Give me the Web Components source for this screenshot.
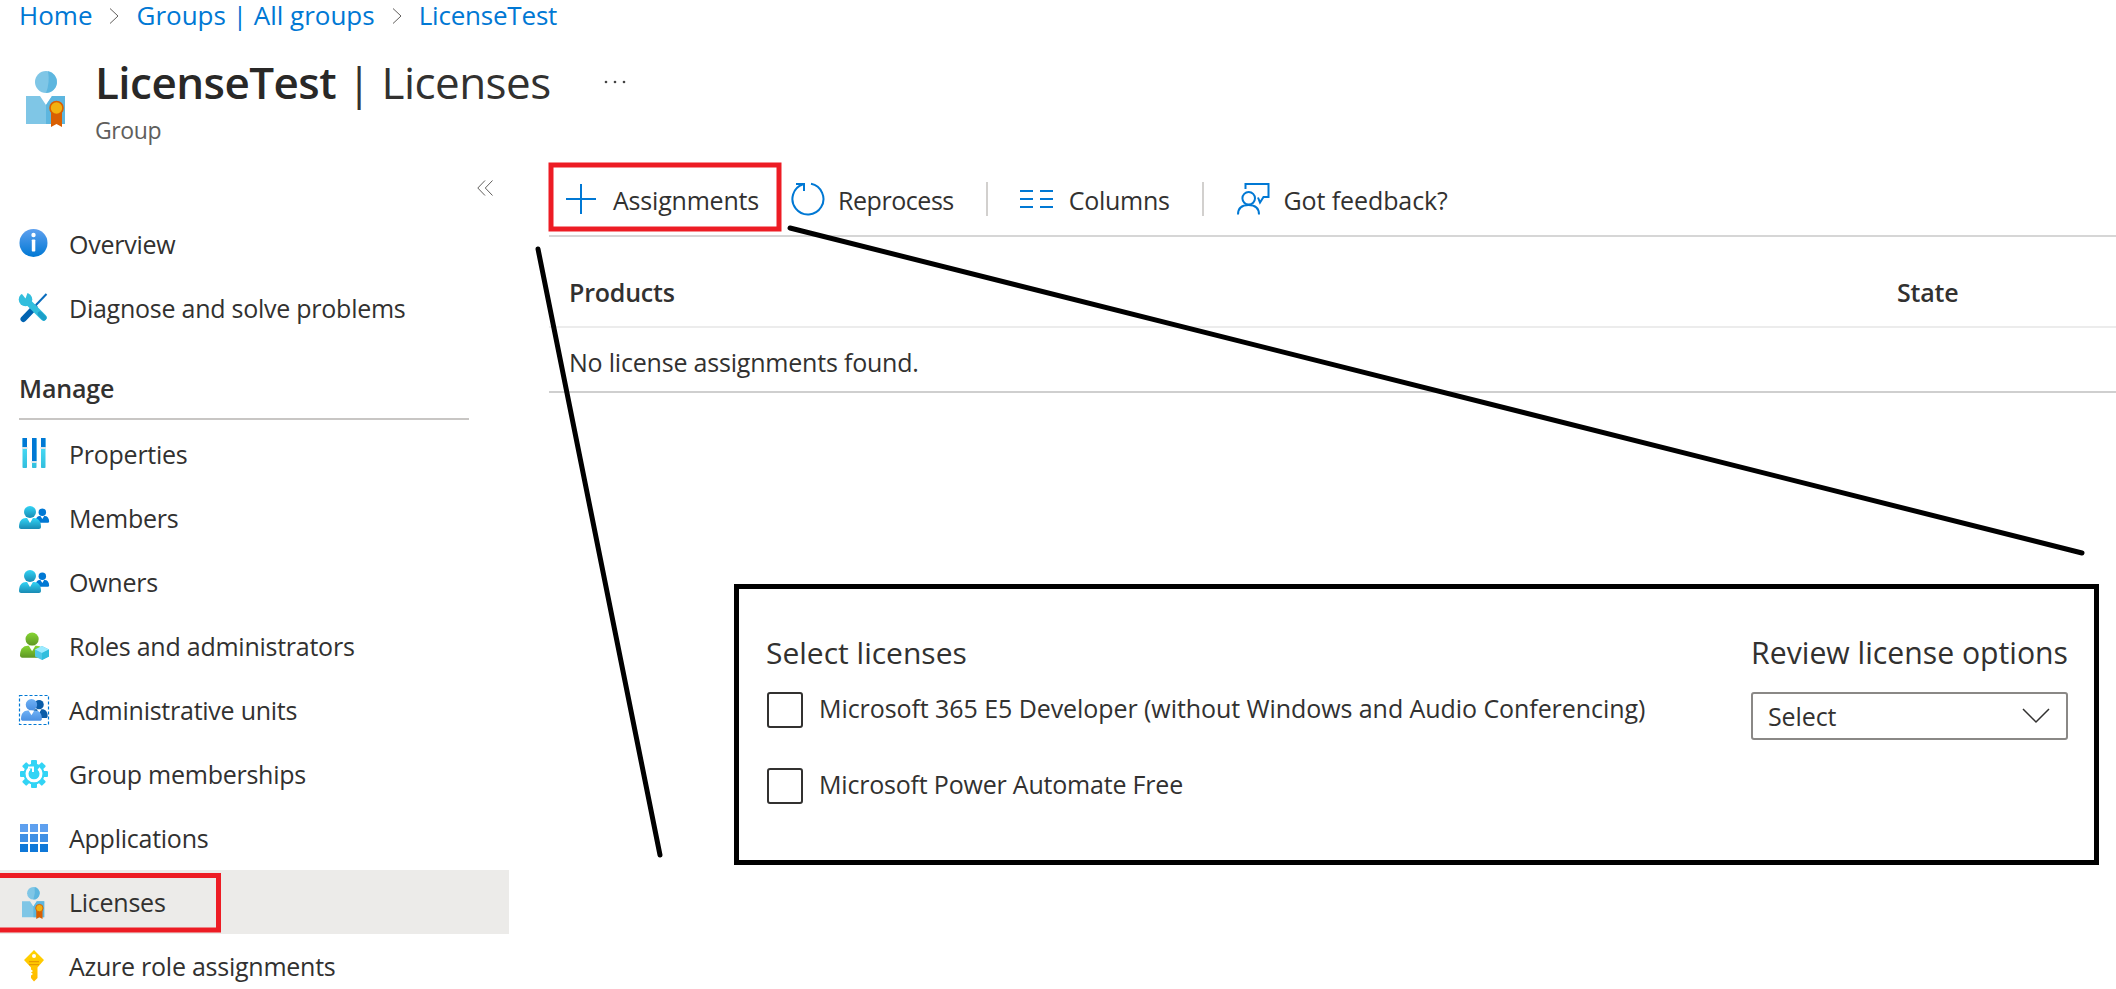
<!DOCTYPE html>
<html lang="en"><head><meta charset="utf-8"><title>LicenseTest | Licenses</title>
<style>
html,body{margin:0;padding:0;background:#fff;height:989px;overflow:hidden}
body{font-family:"Open Sans","Noto Sans",sans-serif;color:#323130}
</style></head><body>
<x-app></x-app>
<script>
const LIC=`<path d="M0 25h14l6 9 6-9h13v28H0z" fill="#7fc6e6"/><path d="M20 34l6-9h13v28H20z" fill="#5db6df"/><circle cx="20" cy="11" r="11" fill="#7fc6e6"/><path d="M22 .2A11 11 0 0 1 20 22 40 40 0 0 0 22 .2z" fill="#5db6df"/><path d="M25 40h11v16l-5.500-3-5.500 3z" fill="#d95f02"/><circle cx="30.500" cy="37" r="6.500" fill="#f2b10f" stroke="#d95f02" stroke-width="1.600"/>`;
const PERSON=(x,y,s,a,b)=>`<g transform="translate(${x} ${y}) scale(${s})"><circle cx="11" cy="6" r="6" fill="${a}"/><path d="M0 21c0-6 3-9 7-9h8c4 0 7 3 7 9 0 1-1 2-2 2H2c-1 0-2-1-2-2z" fill="${b}"/><path d="M8 12h6l-3 5z" fill="#fff"/></g>`;
const GRAD=(id,a,b)=>`<defs><linearGradient id="${id}" x1="0" y1="0" x2="0" y2="1"><stop offset="0" stop-color="${a}"/><stop offset="1" stop-color="${b}"/></linearGradient></defs>`;
const TEETH=[0,45,90,135,180,225,270,315].map(a=>`<rect x="17" y="6" width="6" height="6" rx="1" transform="rotate(${a} 20 20)" fill="#32d4f5"/>`).join('');
const ICONS={
 info:GRAD('g','#5ea0ef','#0078d4')+`<circle cx="19.500" cy="19" r="14" fill="url(#g)"/><rect x="17.800" y="15.500" width="3.500" height="12" rx=".8" fill="#fff"/><circle cx="19.500" cy="11" r="2.200" fill="#fff"/>`,
 tools:`<path d="M32.500 6 22 17" stroke="#0a6cbd" stroke-width="2"/><path d="M20.500 19.500 9.500 31" stroke="#0063b1" stroke-width="6" stroke-linecap="round"/><path d="M13 13 29.500 29.500" stroke="#32bedd" stroke-width="6.500" stroke-linecap="round"/><circle cx="11.500" cy="11.500" r="6.800" fill="#32bedd"/><path d="M11.500 10.500 6 3.500h8z" fill="#fff"/><path d="M26 26l4 4" stroke="#1b9fc9" stroke-width="5" stroke-linecap="round"/>`,
 props:GRAD('c','#50e6ff','#32bedd')+`<rect x="8.500" y="4" width="4.500" height="30" rx=".8" fill="url(#c)"/><rect x="18" y="4" width="4.500" height="30" rx=".8" fill="url(#c)"/><rect x="27" y="4" width="4.500" height="30" rx=".8" fill="url(#c)"/><rect x="8.500" y="4" width="4.500" height="9" fill="#0078d4"/><rect x="18" y="4" width="4.500" height="23" fill="#0078d4"/><rect x="27" y="4" width="4.500" height="9" fill="#0078d4"/><rect x="8" y="13" width="5.500" height="2" fill="#d8e4ea"/><rect x="17.500" y="27" width="5.500" height="2" fill="#d8e4ea"/><rect x="26.500" y="13" width="5.500" height="2" fill="#d8e4ea"/>`,
 people:GRAD('p','#32d4f5','#198ab3')+PERSON(21.500,10.500,.62,'#0078d4','#0078d4')+PERSON(5,8,1,'url(#p)','url(#p)'),
 roles:GRAD('r','#86d633','#5e9624')+PERSON(6,6.500,1.1,'url(#r)','url(#r)')+`<path d="M28 20l7 3.500v7L28 34l-7-3.500v-7z" fill="#50c8e8"/><path d="M28 20l7 3.500-7 3.500-7-3.500z" fill="#9cebff"/><path d="M28 27l7-3.500v7L28 34z" fill="#32bedd"/>`,
 admin:GRAD('a','#6fb1f5','#4a90e2')+`<rect x="5.500" y="5.500" width="29" height="29" fill="none" stroke="#0078d4" stroke-width="1.200" stroke-dasharray="3 2"/>`+PERSON(16.500,10,.78,'#0a5ca8','#0a5ca8')+PERSON(7,9,.95,'url(#a)','url(#a)'),
 gear:`${TEETH}<circle cx="20" cy="20" r="10.500" fill="#32d4f5"/><path d="M15.500 14.500a7 7 0 1 0 9 0" fill="none" stroke="#fff" stroke-width="3"/><path d="M14 13.500h5v4.500" fill="none" stroke="#fff" stroke-width="2"/>`,
 apps:`<path d="M6 6h8v8H6zM16 6h8v8h-8zM26 6h8v8h-8z" fill="#5ea0ef"/><path d="M6 16h8v8H6zM16 16h8v8h-8zM26 16h8v8h-8z" fill="#3f8fe4"/><path d="M6 26h8v8H6zM16 26h8v8h-8zM26 26h8v8h-8z" fill="#0f78d8"/>`,
 lic:`<g transform="translate(8 5) scale(.57)">${LIC}</g>`,
 key:GRAD('k','#ffd400','#ffb900')+`<path d="M20 4l10 10-6.500 7.500V32L20 35.500 17 32v-2.500l2-1.500-2-1.500 2-1.500-2-1.500v-2L10 14z" fill="url(#k)"/><circle cx="20" cy="10" r="2" fill="#fff"/><path d="M15 15h10v1.200H15zM15 18h10v1.200H15z" fill="#e89a00"/>`
};
function def(name,html){customElements.define(name,class extends HTMLElement{constructor(){super();const s=this.attachShadow({mode:'open'});s.innerHTML=typeof html==='function'?html(this):html;}})}

def('x-breadcrumb',`<style>:host{display:flex;align-items:center;height:30px;padding-left:19px;font-size:26px;line-height:30px;color:#0078d4}
span{white-space:nowrap}svg{margin:2px 17px 0 17px;flex:none}</style>
<span>Home</span><svg width="10" height="16" viewBox="0 0 10 16"><path d="M1 .5 9 8l-8 7.500" fill="none" stroke="#605e5c" stroke-width="1"/></svg>
<span>Groups | All groups</span><svg width="10" height="16" viewBox="0 0 10 16"><path d="M1 .5 9 8l-8 7.500" fill="none" stroke="#605e5c" stroke-width="1"/></svg>
<span style="letter-spacing:-.2px">LicenseTest</span>`);

def('x-header',`<style>:host{display:flex;height:133px;padding:41px 0 0 26px;box-sizing:border-box}
.ic{flex:none;margin-right:30px}.w{margin-top:-19px}.t{font-size:44px;line-height:60px;letter-spacing:-.55px;white-space:nowrap;color:#323130}
b{font-weight:600;color:#292827}.s{font-size:23px;line-height:34px;margin-top:1px;color:#605e5c;letter-spacing:-.4px}
.d{flex:none;margin:8px 0 0 53px;align-self:flex-start}</style>
<svg class="ic" width="39" height="56" viewBox="0 0 39 56">${LIC}</svg>
<div class="w"><div class="t"><b>LicenseTest</b> | Licenses</div><div class="s">Group</div></div>
<svg class="d" width="22" height="6" viewBox="0 0 22 6"><circle cx="2" cy="3" r="1.300" fill="#444"/><circle cx="11" cy="3" r="1.300" fill="#444"/><circle cx="20" cy="3" r="1.300" fill="#444"/></svg>`);

def('x-nav-item',(h)=>`<style>:host{display:flex;align-items:center;height:64px;padding-left:14px;font-size:25px;letter-spacing:-.25px;white-space:nowrap;color:#323130}
:host([selected]){background:#ecebe9}svg{flex:none;margin-right:15px}</style>
<svg width="40" height="40" viewBox="0 0 40 40">${ICONS[h.getAttribute('icon')]}</svg><slot></slot>`);

def('x-sidebar',`<style>:host{display:block;width:509px;flex:none}
.top{display:flex;justify-content:flex-end;align-items:center;height:49px;padding-right:16px}
.m{height:64px;box-sizing:border-box;margin:16px 40px 2px 19px;width:450px;border-bottom:2px solid #c8c6c4;font-size:25px;font-weight:600;letter-spacing:-.15px;color:#323130;display:flex;align-items:flex-end;padding-bottom:12px;line-height:36px}</style>
<div class="top"><svg width="16" height="16" viewBox="0 0 16 16"><path d="M8 .5 .8 8 8 15.500M15.500 .5 8.300 8l7.200 7.500" fill="none" stroke="#605e5c" stroke-width="1"/></svg></div>
<x-nav-item icon="info">Overview</x-nav-item>
<x-nav-item icon="tools">Diagnose and solve problems</x-nav-item>
<div class="m">Manage</div>
<x-nav-item icon="props">Properties</x-nav-item>
<x-nav-item icon="people">Members</x-nav-item>
<x-nav-item icon="people">Owners</x-nav-item>
<x-nav-item icon="roles">Roles and administrators</x-nav-item>
<x-nav-item icon="admin">Administrative units</x-nav-item>
<x-nav-item icon="gear">Group memberships</x-nav-item>
<x-nav-item icon="apps">Applications</x-nav-item>
<x-nav-item icon="lic" selected>Licenses</x-nav-item>
<x-nav-item icon="key">Azure role assignments</x-nav-item>`);

def('x-tool',`<style>:host{display:inline-flex;align-items:center;font-size:25px;letter-spacing:var(--ls,-.2px);white-space:nowrap;color:#323130}
::slotted(svg){flex:none;margin-right:var(--gap,16px)}span{padding-top:2px}</style><slot name="i"></slot><span><slot></slot></span>`);

def('x-toolbar',`<style>:host{display:flex;align-items:center;height:74px;box-sizing:border-box;padding-left:16px;border-bottom:2px solid #d6d6d6}
.sep{width:2px;height:34px;background:#d2d0ce;margin:0 32px;flex:none}
x-tool:first-of-type{margin-right:32px}.r{--gap:13px;--ls:-.45px}.c{--ls:-.3px}.f{--gap:14px;--ls:-.1px}</style>
<x-tool><svg slot="i" width="32" height="32" viewBox="0 0 32 32"><path d="M16 1v30M1 16h30" stroke="#0078d4" stroke-width="2" fill="none"/></svg>Assignments</x-tool>
<x-tool class="r"><svg slot="i" width="34" height="34" viewBox="0 0 34 34"><path d="M20 1.800A15.500 15.500 0 1 1 12 2.300" fill="none" stroke="#0078d4" stroke-width="2"/><path d="M5 2H13V9" fill="none" stroke="#0078d4" stroke-width="2"/></svg>Reprocess</x-tool>
<div class="sep"></div>
<x-tool class="c"><svg slot="i" width="33" height="20" viewBox="0 0 33 20"><path d="M0 2h13M20 2h13M0 10h13M20 10h13M0 18h13M20 18h13" stroke="#0078d4" stroke-width="2.200" fill="none"/></svg>Columns</x-tool>
<div class="sep"></div>
<x-tool class="f"><svg slot="i" width="34" height="34" viewBox="0 0 34 34"><path d="M9.500 7V2H32.500V15H27.500L24 20.500 22 15.500" fill="none" stroke="#0078d4" stroke-width="2"/><circle cx="12.700" cy="16.300" r="6.300" fill="none" stroke="#0078d4" stroke-width="2"/><path d="M2 32.500C2 26 6 23 12.500 23S23 26 23 32.500" fill="none" stroke="#0078d4" stroke-width="2"/></svg>Got feedback?</x-tool>`);

def('x-table',`<style>:host{display:block}
.r{display:grid;grid-template-columns:1328px 1fr;padding-left:20px;box-sizing:border-box;font-size:25px;letter-spacing:-.2px}
.h{height:91px;padding-top:37px;font-weight:600;line-height:36px;border-bottom:2px solid #ececec;color:#323130}
.b{height:65px;padding-top:16px;line-height:36px;border-bottom:2px solid #cfcfcf}</style>
<div class="r h"><div>Products</div><div>State</div></div>
<div class="r b"><div>No license assignments found.</div></div>`);

def('x-check',`<style>:host{display:flex;align-items:flex-start;font-size:25px;white-space:nowrap;color:#323130}
i{display:block;flex:none;width:36px;height:36px;box-sizing:border-box;border:2px solid #323130;border-radius:3px;margin-right:16px}
span{line-height:36px;margin-top:-2px}</style><i></i><span><slot></slot></span>`);

def('x-select',`<style>:host{display:flex;align-items:center;justify-content:space-between;box-sizing:border-box;width:317px;height:48px;border:2px solid #8a8886;border-radius:3px;padding:0 16px 0 15px;font-size:25px;letter-spacing:-.1px;color:#323130}
svg{flex:none}</style><slot></slot><svg width="28" height="16" viewBox="0 0 28 16"><path d="M1 1l13 13L27 1" fill="none" stroke="#323130" stroke-width="1.500"/></svg>`);

def('x-callout',`<style>:host{position:absolute;left:734px;top:584px;width:1365px;height:281px;box-sizing:border-box;border:5px solid #000;background:#fff;display:flex;justify-content:space-between;padding:44px 26px 0 27px;color:#323130}
h3{margin:0 0 19px;font-weight:400;font-size:30px;line-height:40px;white-space:nowrap}
.rt{display:flex;flex-direction:column;align-items:flex-end}.rt h3{font-size:30.200px}
x-check{margin:0 0 40px 1px;letter-spacing:-.2px}x-check:first-of-type{letter-spacing:-.07px}</style>
<div><h3>Select licenses</h3><x-check>Microsoft 365 E5 Developer (without Windows and Audio Conferencing)</x-check><x-check>Microsoft Power Automate Free</x-check></div>
<div class="rt"><h3>Review license options</h3><x-select>Select</x-select></div>`);

def('x-marks',`<style>:host{position:absolute;inset:0;pointer-events:none;display:block}svg{position:absolute;left:0;top:0}</style>
<svg width="2116" height="989"><g fill="none" stroke="#ed1c24" stroke-width="5"><rect x="551" y="165" width="228" height="64"/><rect x="-5" y="875.500" width="223.500" height="54.500"/></g>
<path d="M790 228 2082 553" stroke="#000" stroke-width="5" stroke-linecap="round"/><path d="M538 249 660 855" stroke="#000" stroke-width="5" stroke-linecap="round"/></svg>`);

def('x-app',`<style>:host{display:block;position:relative;width:2116px;height:989px;overflow:hidden}
.w{display:flex}main{flex:1;margin-left:40px;min-width:0}</style>
<x-breadcrumb></x-breadcrumb><x-header></x-header>
<div class="w"><x-sidebar></x-sidebar><main><x-toolbar></x-toolbar><x-table></x-table></main></div>
<x-marks></x-marks><x-callout></x-callout>`);
</script>
</body></html>
